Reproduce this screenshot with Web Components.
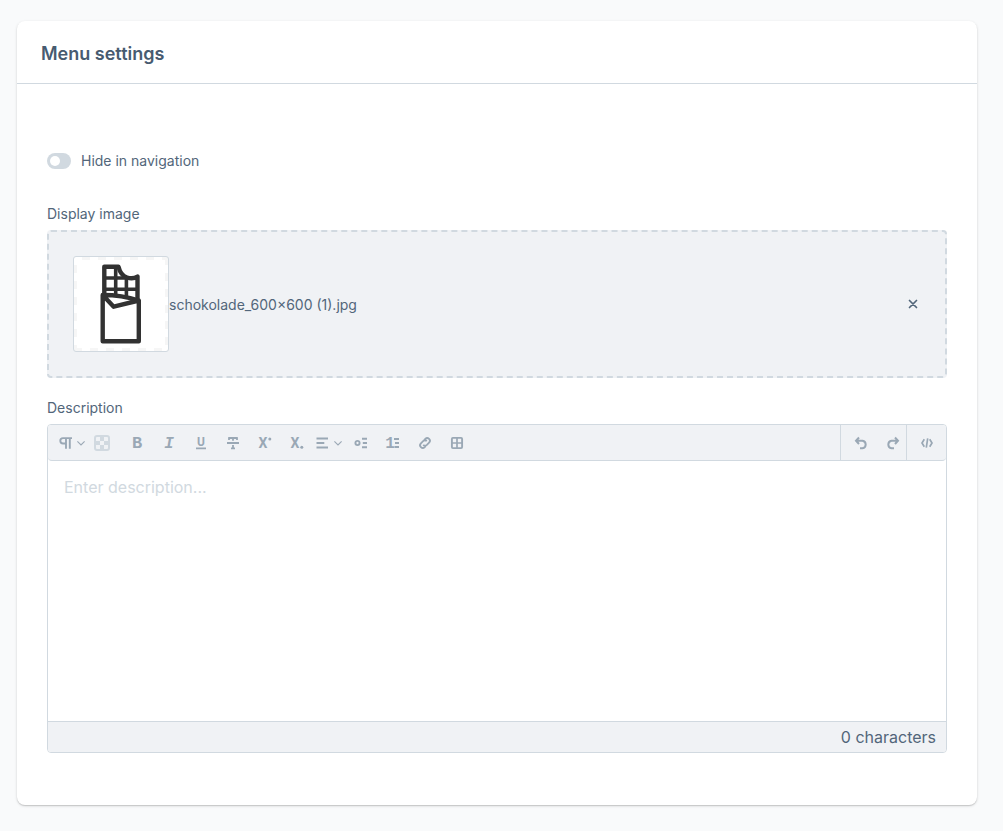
<!DOCTYPE html>
<html lang="en">
<head>
<meta charset="utf-8">
<title>Menu settings</title>
<style>
  body { margin: 0; background: #f9fafb; color: #52667a; font-family: Inter, "Liberation Sans", sans-serif; font-size: 14px; line-height: 20px; }
</style>
</head>
<body>
<settings-card heading="Menu settings">
  <toggle-switch label="Hide in navigation"></toggle-switch>
  <media-field label="Display image" filename="schokolade_600×600 (1).jpg"></media-field>
  <text-editor label="Description" placeholder="Enter description..."></text-editor>
</settings-card>

<script>
class BaseElement extends HTMLElement {
  connectedCallback() {
    if (this.shadowRoot) return;
    this.attachShadow({ mode: "open" }).innerHTML =
      `<style>*{box-sizing:border-box} :host{display:block} button{border:0;padding:0;background:none;color:inherit;font:inherit;cursor:pointer}</style>` + this.render();
  }
}

customElements.define("settings-card", class extends BaseElement {
  render() {
    return `<style>
      :host { margin: 21px 26px 26px 17px; background: #fff; border-radius: 8px; box-shadow: 0 1px 1px rgba(0,0,0,.12), 0 1px 3px rgba(0,0,0,.14); }
      header { padding: 22px 24px 18px; border-bottom: 1px solid #d1d9e0; }
      h2 { margin: 0; font-size: 18px; line-height: 22px; font-weight: 600; color: #475b70; }
      .body { padding: 67px 30px 52px; }
    </style>
    <header><h2>${this.getAttribute("heading")}</h2></header>
    <div class="body"><slot></slot></div>`;
  }
});

customElements.define("toggle-switch", class extends BaseElement {
  render() {
    return `<style>
      :host { margin-bottom: 33px; }
      label { display: inline-flex; align-items: center; gap: 10px; vertical-align: top; }
      input { appearance: none; display: flex; width: 24px; height: 16px; margin: 0; padding: 3px; border-radius: 8px; background: #d1d9e0; }
      input::before { content: ""; width: 10px; height: 10px; border-radius: 50%; background: #fff; }
      input:checked { background: #189eff; justify-content: flex-end; }
    </style>
    <label><input type="checkbox" role="switch"><span>${this.getAttribute("label")}</span></label>`;
  }
});

customElements.define("choco-thumb", class extends BaseElement {
  render() {
    return `<style>
      :host { width: 96px; height: 96px; border: 1px solid #d1d9e0; border-radius: 3px; overflow: hidden;
        background: conic-gradient(#f6f6f6 25%, #fff 0 50%, #f6f6f6 0 75%, #fff 0) 0 0 / 16px 16px; }
      .sheet { margin: 3px; height: 88px; background: #fff; }
      svg { display: block; }
    </style>
    <div class="sheet"><svg width="88" height="88" viewBox="4 4 88 88" fill="none" stroke="#323232" stroke-width="4.400" stroke-linejoin="round" stroke-linecap="round" role="img" aria-label="Chocolate bar">
      <path d="M31.300 38V10.800H45.500C47 17 49 20 54 21.500Q60 23.500 64.500 20.500V43"/>
      <path stroke-width="3.600" stroke-linecap="butt" d="M42.700 10.800V38M53.400 21V40M31.500 22H54M31.500 33.300H65"/>
      <path d="M29.700 39V85.300H65.800V44.500Q49 39 29.700 39L40.700 50.700L65.800 44.500"/>
    </svg></div>`;
  }
});

customElements.define("media-field", class extends BaseElement {
  render() {
    return `<style>
      :host { margin-bottom: 20px; }
      .label { margin-bottom: 6px; }
      .drop { display: flex; align-items: center; padding: 24px; border: 2px dashed #d1d9e0; border-radius: 4px; background: #f0f2f5; }
      .name { flex: 1; padding-top: 2px; }
      button { display: grid; place-items: center; width: 16px; height: 16px; }
      svg { display: block; }
    </style>
    <div class="label" id="l">${this.getAttribute("label")}</div>
    <div class="drop" role="group" aria-labelledby="l">
      <choco-thumb></choco-thumb>
      <span class="name">${this.getAttribute("filename")}</span>
      <button type="button" aria-label="Remove image"><svg width="10" height="10" viewBox="0 0 10 10" stroke="#52667a" stroke-width="1.700" stroke-linecap="round"><path d="M1.500 1.500L8.500 8.500M8.500 1.500L1.500 8.500"/></svg></button>
    </div>`;
  }
});

const CHEVRON = '<svg width="8" height="16" viewBox="0 0 8 16" fill="none" stroke="currentColor" stroke-width="1.100"><path d="M.4 6.400L4 9.900L7.600 6.400"/></svg>';
const ICONS = {
  paragraph: '<path d="M7.500 8.500H5A2.700 2.700 0 0 1 5 3.100H14M8 3V13.800M11.800 3V13.800" stroke-width="1.900"/>',
  bold: '<text x="8" y="13" font-family="Liberation Mono" font-weight="700" font-size="17">B</text>',
  italic: '<text x="8" y="13" font-family="Liberation Mono" font-weight="700" font-style="italic" font-size="16">I</text>',
  underline: '<text x="8" y="11" font-family="Roboto" font-weight="700" font-size="12">U</text><path d="M3 13.300H13" stroke-width="1.700"/>',
  strike: '<path d="M2 8H14M3.200 3H12.800M8 3V5.800M8 10V14M4 3V5M12 3V5M6 13.300H10" stroke-width="1.800"/>',
  superscript: '<text x="6" y="13" font-family="Roboto" font-weight="700" font-size="14">X</text><circle cx="12.800" cy="4" r="1.500" fill="currentColor" stroke="none"/>',
  subscript: '<text x="6" y="13" font-family="Roboto" font-weight="700" font-size="14">X</text><circle cx="12.800" cy="12.300" r="1.500" fill="currentColor" stroke="none"/>',
  align: '<path d="M1.500 3.500H13M1.500 8H9.300M1.500 12.500H13" stroke-width="1.900"/>',
  bullets: '<circle cx="4.500" cy="8" r="2.100" stroke-width="1.900"/><path d="M9 3.800H14M9.800 8H14M9 12.200H14" stroke-width="1.900"/>',
  numbers: '<text x="5" y="13" font-family="Liberation Mono" font-weight="700" font-size="16">1</text><path d="M9 4H14M10 8H14M9.500 12H14" stroke-width="1.800"/>',
  link: '<path transform="rotate(-45 8 8)" d="M6.500 10.700H4.900A2.700 2.700 0 0 1 4.900 5.300H8A2.700 2.700 0 0 1 10.500 8M9.500 5.300H11.100A2.700 2.700 0 0 1 11.100 10.700H8A2.700 2.700 0 0 1 5.500 8" stroke-width="1.800"/>',
  table: '<rect x="2.900" y="2.900" width="10.200" height="10.200" rx="1" stroke-width="1.900"/><path d="M8 3V13M3 8H13" stroke-width="1.700"/>',
  undo: '<path d="M6 2.500L3 5.700L6 9M3.500 5.700H9.500A3.800 3.800 0 0 1 9.500 13.200H7" stroke-width="2"/>',
  redo: '<path d="M10 2.500L13 5.700L10 9M12.500 5.700H6.500A3.800 3.800 0 0 0 6.500 13.200H9" stroke-width="2"/>',
  code: '<path d="M5.300 4.300L3 8L5.300 11.700M10.700 4.300L13 8L10.700 11.700M8.700 3.300L7.300 12.700" stroke-width="1.700"/>'
};

customElements.define("tool-button", class extends BaseElement {
  render() {
    const menu = this.hasAttribute("menu");
    return `<style>
      button { display: flex; align-items: center; justify-content: center; gap: 3px; width: 32px; height: 36px; }
      :host([menu]) button { justify-content: flex-start; padding-left: 2px; }
      :host([wide]) button { width: 39px; }
      :host([narrow]) button { width: 26px; }
      svg { display: block; flex: none; overflow: visible; }
      text { fill: currentColor; stroke: none; text-anchor: middle; line-height: 1; }
    </style>
    <button type="button" aria-label="${this.getAttribute("label")}"${menu ? ' aria-haspopup="menu"' : ""}><svg width="16" height="16" viewBox="0 0 16 16" fill="none" stroke="currentColor">${ICONS[this.getAttribute("icon")]}</svg>${menu ? CHEVRON : ""}</button>`;
  }
});

customElements.define("text-editor", class extends BaseElement {
  render() {
    const tools = [["bold","Bold"],["italic","Italic"],["underline","Underline"],["strike","Strikethrough"],["superscript","Superscript"],["subscript","Subscript"],["align","Alignment","menu"],["bullets","Bulleted list"],["numbers","Numbered list"],["link","Link"],["table","Table"]];
    const tool = ([icon, label, kind = ""]) => `<tool-button icon="${icon}" label="${label}" ${kind}></tool-button>`;
    return `<style>
      label { display: block; margin-bottom: 6px; }
      .box { border: 1px solid #d1d9e0; border-radius: 4px; overflow: hidden; background: #fff; }
      .bar { display: flex; align-items: center; height: 36px; padding-left: 8px; background: #f0f2f5; border-bottom: 1px solid #d1d9e0; border-radius: 0 0 4px 4px; color: #9aa8b5; }
      .color { width: 16px; height: 16px; margin: 0 11px 0 6px; border: 2px solid #d1d9e0; border-radius: 3px;
        background: conic-gradient(#d1d9e0 25%, #f0f2f5 0 50%, #d1d9e0 0 75%, #f0f2f5 0) 0 0 / 8px 8px; }
      .end { display: flex; height: 100%; border-left: 1px solid #d1d9e0; }
      .history { margin-left: auto; padding-left: 7px; gap: 6px; }
      textarea { display: block; width: 100%; height: 260px; padding: 15px 16px; border: 0; outline: 0; resize: none; font: 16px/22px Inter, "Liberation Sans", sans-serif; color: #52667a; }
      textarea::placeholder { color: #d1d9e0; opacity: 1; }
      footer { padding: 5px 10px 4px; border-top: 1px solid #d1d9e0; background: #f0f2f5; text-align: right; font-size: 16px; line-height: 21px; }
    </style>
    <label for="field">${this.getAttribute("label")}</label>
    <div class="box">
      <div class="bar" role="toolbar" aria-label="Formatting">
        ${tool(["paragraph", "Paragraph format", "menu"])}
        <button class="color" type="button" aria-label="Text color"></button>
        ${tools.map(tool).join("")}
        <div class="end history">${tool(["undo", "Undo", "narrow"])}${tool(["redo", "Redo", "narrow"])}</div>
        <div class="end">${tool(["code", "Source code", "wide"])}</div>
      </div>
      <textarea id="field" placeholder="${this.getAttribute("placeholder")}"></textarea>
      <footer>0 characters</footer>
    </div>`;
  }
});
</script>
</body>
</html>
